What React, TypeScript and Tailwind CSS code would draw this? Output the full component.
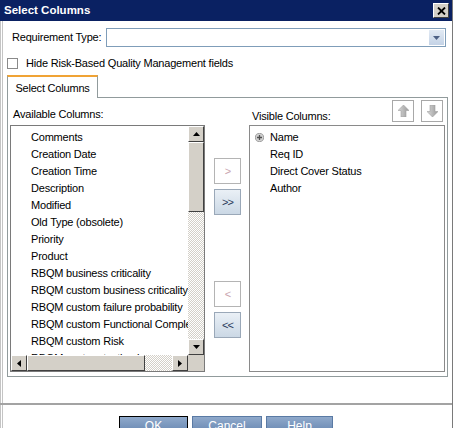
import React from 'react';

const available = [
    'Comments',
    'Creation Date',
    'Creation Time',
    'Description',
    'Modified',
    'Old Type (obsolete)',
    'Priority',
    'Product',
    'RBQM business criticality',
    'RBQM custom business criticality',
    'RBQM custom failure probability',
    'RBQM custom Functional Complexity',
    'RBQM custom Risk',
    'RBQM custom testing hours',
];

const visible = ['Name', 'Req ID', 'Direct Cover Status', 'Author'];

const Tri: React.FC<{ dir: 'up' | 'down' | 'left' | 'right' }> = ({ dir }) => {
    const pts = {
        up: '0,4 7,4 3.5,0',
        down: '0,0 7,0 3.5,4',
        left: '4,0 4,7 0,3.5',
        right: '0,0 0,7 4,3.5',
    }[dir];
    const vertical = dir === 'up' || dir === 'down';
    return (
        <svg width={vertical ? 7 : 4} height={vertical ? 4 : 7} viewBox={vertical ? '0 0 7 4' : '0 0 4 7'}>
            <polygon points={pts} fill="#000" />
        </svg>
    );
};

const ScrollBtn: React.FC<{ dir: 'up' | 'down' | 'left' | 'right' }> = ({ dir }) => (
    <div className="w-[16px] h-[16px] shrink-0 bg-[#d4d0c8] border border-t-white border-l-white border-r-[#404040] border-b-[#404040] flex items-center justify-center">
        <Tri dir={dir} />
    </div>
);

const MoveBtn: React.FC<{ label: string; active?: boolean }> = ({ label, active }) => (
    <button
        className={`w-[27px] h-[26px] flex items-center justify-center text-[11px] tracking-[-1px] border ${active ? 'bg-gradient-to-b from-[#eaf0f6] to-[#cbd8e5] border-[#9aa8b8] text-[#2a3a5a]' : 'bg-white border-[#b4b4b4] text-[#c9a4ae]'}`}
    >
        {label}
    </button>
);

const BlockArrow: React.FC<{ up?: boolean }> = ({ up }) => (
    <svg width="11" height="12" viewBox="0 0 11 12">
        <defs>
            <linearGradient id={up ? 'ga' : 'gb'} x1="0" y1="0" x2="1" y2="0">
                <stop offset="0" stopColor="#d8d8d8" />
                <stop offset="1" stopColor="#9a9a9a" />
            </linearGradient>
        </defs>
        <polygon
            points={up ? '5.5,0 11,5.5 8,5.5 8,12 3,12 3,5.5 0,5.5' : '5.5,12 11,6.5 8,6.5 8,0 3,0 3,6.5 0,6.5'}
            fill={`url(#${up ? 'ga' : 'gb'})`}
            stroke="#a0a0a0"
            strokeWidth="0.6"
        />
    </svg>
);

const App: React.FC = () => {
    return (
        <div className="w-[455px] h-[428px] overflow-hidden bg-white font-['Liberation_Sans',Arial,sans-serif] text-[11px] tracking-[-0.2px] text-black">
            <div className="w-[453px] h-full border-l-[3px] border-double border-l-[#c4c4c4] border-r border-r-[#7a7a7a]">
                {/* Title bar */}
                <div className="h-[21px] bg-[#0a2162] flex items-center justify-between pl-[4px] pr-[3px] -ml-[3px]">
                    <span className="text-white font-bold text-[11.5px] tracking-normal">Select Columns</span>
                    <div className="w-[16px] h-[15px] bg-[#d4d0c8] border border-t-white border-l-white border-r-[#404040] border-b-[#404040] flex items-center justify-center">
                        <svg width="9" height="8" viewBox="0 0 9 8">
                            <path d="M1 0.5 L8 7.5 M8 0.5 L1 7.5" stroke="#000" strokeWidth="1.8" />
                        </svg>
                    </div>
                </div>

                {/* Requirement type */}
                <div className="mt-[7px] h-[19px] flex items-center pl-[9px] pr-[6px]">
                    <span>Requirement Type:</span>
                    <div className="ml-auto w-[340px] h-[19px] border border-[#7f9db9] bg-white flex justify-end p-px">
                        <div className="w-[15px] h-full bg-gradient-to-b from-[#e2eaf4] to-[#c4d3e6] flex items-center justify-center">
                            <svg width="7" height="4" viewBox="0 0 7 4">
                                <polygon points="0,0 7,0 3.5,4" fill="#4d6185" />
                            </svg>
                        </div>
                    </div>
                </div>

                {/* Checkbox */}
                <div className="mt-[11px] h-[11px] flex items-center pl-[4px]">
                    <div className="w-[11px] h-[11px] border border-[#8a8a8a] bg-white" />
                    <span className="ml-[8px] leading-none">Hide Risk-Based Quality Management fields</span>
                </div>

                {/* Tab */}
                <div className="mt-[6px] pl-[4px] flex">
                    <div className="relative z-10 -mb-px w-[91px] h-[23px] bg-white border-x border-[#919b9c] border-t-2 border-t-[#f0a335] flex items-center justify-center">
                        <span className="pt-px">Select Columns</span>
                    </div>
                </div>

                {/* Tab panel */}
                <div className="ml-[4px] w-[441px] h-[280px] border border-[#919b9c] flex pt-[2px] pl-[2px]">
                    {/* Available */}
                    <div className="w-[195px] flex flex-col">
                        <div className="h-[25px] flex items-center pt-[3px] pl-[3px]">Available Columns:</div>
                        <div className="h-[247px] border border-[#7a7a7a] flex flex-col">
                            <div className="flex h-[229px]">
                                <div className="flex-1 overflow-hidden pt-[3px]">
                                    {available.map((c) => (
                                        <div key={c} className="h-[17px] leading-[17px] pl-[20px] whitespace-nowrap">
                                            {c}
                                        </div>
                                    ))}
                                </div>
                                <div className="w-[16px] flex flex-col">
                                    <ScrollBtn dir="up" />
                                    <div className="h-[70px] bg-[#d4d0c8] border border-t-white border-l-white border-r-[#404040] border-b-[#404040]" />
                                    <div className="flex-1 bg-[repeating-conic-gradient(#d4d0c8_0_25%,#ffffff_0_50%)] bg-[length:2px_2px]" />
                                    <ScrollBtn dir="down" />
                                </div>
                            </div>
                            <div className="flex h-[16px]">
                                <ScrollBtn dir="left" />
                                <div className="w-[118px] bg-[#d4d0c8] border border-t-white border-l-white border-r-[#404040] border-b-[#404040]" />
                                <div className="flex-1 bg-[repeating-conic-gradient(#d4d0c8_0_25%,#ffffff_0_50%)] bg-[length:2px_2px]" />
                                <ScrollBtn dir="right" />
                                <div className="w-[16px] bg-[#d4d0c8]" />
                            </div>
                        </div>
                    </div>

                    {/* Move buttons */}
                    <div className="ml-[9px] w-[27px] flex flex-col pt-[58px]">
                        <MoveBtn label=">" />
                        <div className="mt-[5px]">
                            <MoveBtn label=">>" active />
                        </div>
                        <div className="mt-[66px]">
                            <MoveBtn label="<" />
                        </div>
                        <div className="mt-[5px]">
                            <MoveBtn label="<<" active />
                        </div>
                    </div>

                    {/* Visible */}
                    <div className="ml-[8px] w-[196px] flex flex-col">
                        <div className="h-[25px] flex items-start">
                            <span className="pl-[3px] pt-[8px]">Visible Columns:</span>
                            <div className="ml-auto flex gap-[7px] pr-[2px]">
                                <button className="w-[22px] h-[22px] border border-[#a8a8a8] bg-white flex items-center justify-center">
                                    <BlockArrow up />
                                </button>
                                <button className="w-[22px] h-[22px] border border-[#a8a8a8] bg-white flex items-center justify-center">
                                    <BlockArrow />
                                </button>
                            </div>
                        </div>
                        <div className="h-[247px] border border-[#8a8a8a] pt-[3px]">
                            {visible.map((c, i) => (
                                <div key={c} className="h-[17px] leading-[17px] pl-[5px] flex items-center whitespace-nowrap">
                                    {i === 0 ? (
                                        <svg width="9" height="9" viewBox="0 0 9 9" className="mr-[6px]">
                                            <circle cx="4.5" cy="4.5" r="4.1" fill="#d2d2d2" stroke="#8c8c8c" strokeWidth="0.8" />
                                            <path d="M4.5 2 V7 M2 4.5 H7" stroke="#505050" strokeWidth="1.3" />
                                        </svg>
                                    ) : (
                                        <span className="w-[15px]" />
                                    )}
                                    {c}
                                </div>
                            ))}
                        </div>
                    </div>
                </div>

                {/* Separator */}
                <div className="mt-[26px] h-[2px] bg-[#a3a3a3] -ml-[3px]" />

                {/* Buttons */}
                <div className="mt-[11px] flex gap-[4px] pl-[116px]">
                    {['OK', 'Cancel', 'Help'].map((b, i) => (
                        <button
                            key={b}
                            className={`h-[20px] ${i === 0 ? 'w-[69px] border-[#000]' : i === 1 ? 'w-[70px] border-[#5a7aa4]' : 'w-[67px] border-[#5a7aa4]'} border bg-gradient-to-b from-[#8fa9cb] to-[#6282ad] text-white text-[12px] tracking-normal flex items-center justify-center`}
                        >
                            {b}
                        </button>
                    ))}
                </div>
            </div>
        </div>
    );
};

export default App;
